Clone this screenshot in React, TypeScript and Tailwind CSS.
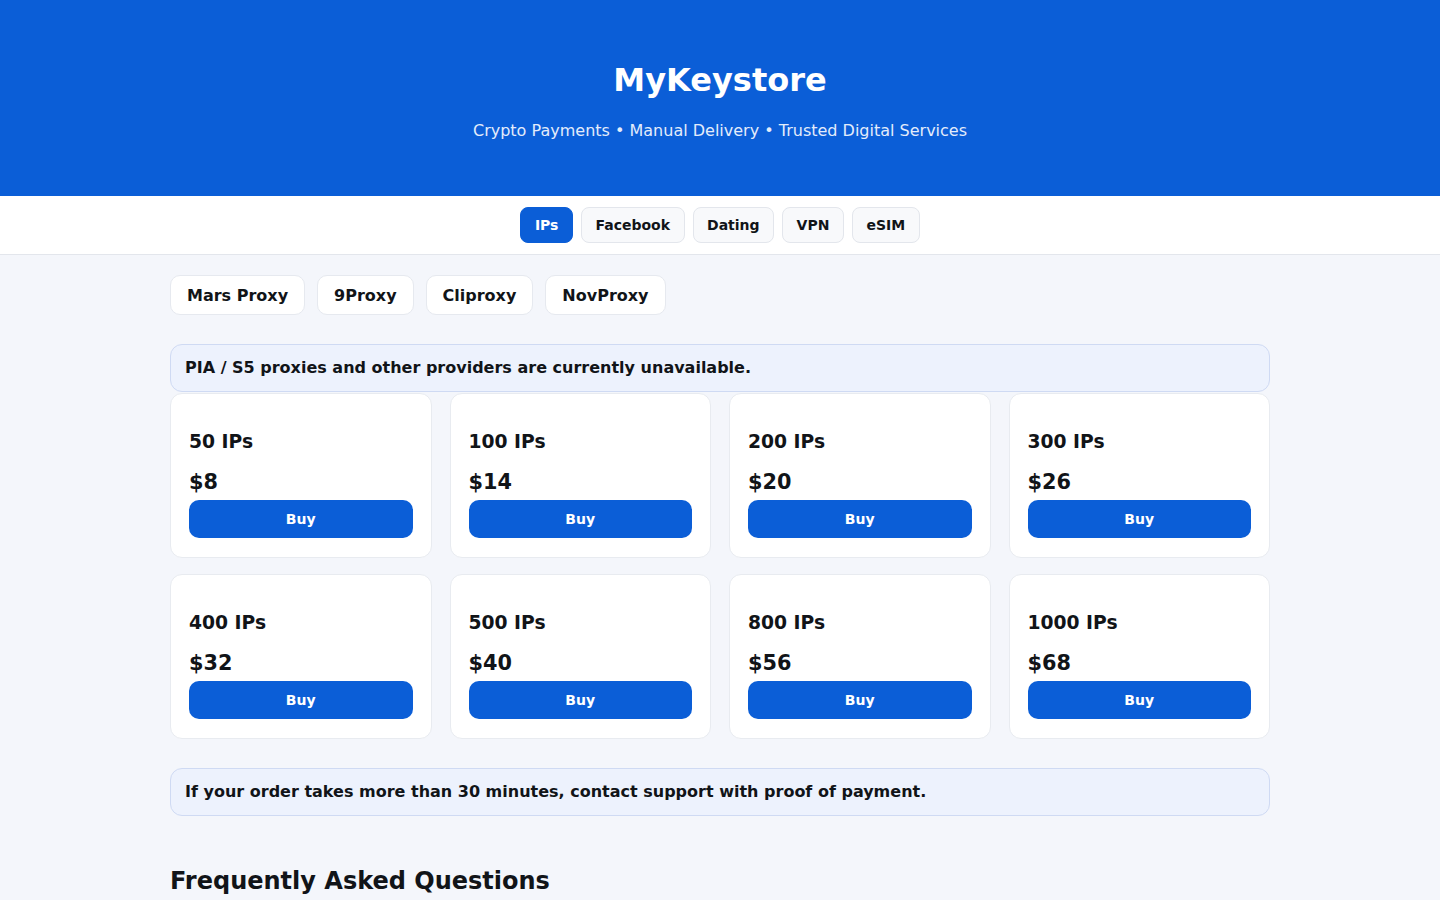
import { useState } from 'react'

const categories = ['IPs', 'Facebook', 'Dating', 'VPN', 'eSIM']

const providers = ['Mars Proxy', '9Proxy', 'Cliproxy', 'NovProxy']

const packages = [
  { id: 1, title: '50 IPs', price: '$8' },
  { id: 2, title: '100 IPs', price: '$14' },
  { id: 3, title: '200 IPs', price: '$20' },
  { id: 4, title: '300 IPs', price: '$26' },
  { id: 5, title: '400 IPs', price: '$32' },
  { id: 6, title: '500 IPs', price: '$40' },
  { id: 7, title: '800 IPs', price: '$56' },
  { id: 8, title: '1000 IPs', price: '$68' },
]

const faqs = [
  {
    q: 'How do I pay?',
    a: 'We accept BTC, USDT and other major cryptocurrencies. Send the exact amount shown at checkout.',
  },
  {
    q: 'How long does delivery take?',
    a: 'Orders are delivered manually, usually within a few minutes of payment confirmation.',
  },
]

export default function App() {
  const [category, setCategory] = useState('IPs')

  return (
    <div className="min-h-screen bg-[#f4f6fb] text-[#111418] font-['DejaVu_Sans',sans-serif]">
      <header className="bg-[#0b5ed7] pt-[60px] pb-[53px] text-center text-white">
        <h1 className="text-[32px] leading-[40px] font-bold">MyKeystore</h1>
        <p className="mt-[19px] text-base leading-6 text-[#e3ecfb]">
          Crypto Payments &bull; Manual Delivery &bull; Trusted Digital Services
        </p>
      </header>

      <nav className="flex justify-center gap-2 border-b border-[#e3e6ec] bg-white py-[11px]">
        {categories.map((c) => (
          <button
            key={c}
            onClick={() => setCategory(c)}
            className={
              c === category
                ? 'h-9 rounded-lg border border-[#0b5ed7] bg-[#0b5ed7] px-[13.5px] text-sm font-bold text-white'
                : 'h-9 rounded-lg border border-[#e3e6ec] bg-[#f8f9fb] px-[13.5px] text-sm font-bold text-[#111418]'
            }
          >
            {c}
          </button>
        ))}
      </nav>

      <main className="mx-auto w-[1100px] pt-5 pb-16">
        <div className="flex gap-3">
          {providers.map((p) => (
            <button
              key={p}
              className="h-10 rounded-[10px] border border-[#e6e9ef] bg-white px-4 pt-px text-base font-bold text-[#111418]"
            >
              {p}
            </button>
          ))}
        </div>

        <div className="mt-[29px] flex h-12 items-center rounded-xl border border-[#cfdaf3] bg-[#edf2fd] px-[14px] text-base font-bold">
          PIA / S5 proxies and other providers are currently unavailable.
        </div>

        <div className="mt-[1px] grid grid-cols-4 gap-x-[18px] gap-y-4">
          {packages.map((pkg) => (
            <div key={pkg.id} className="rounded-xl border border-[#e8ebf0] bg-white px-[18px] pt-[18px] pb-[19px]">
              <h3 className="mt-4 text-[18.72px] leading-7 font-bold">{pkg.title}</h3>
              <p className="mt-3 text-[20.8px] leading-7 font-bold">{pkg.price}</p>
              <button className="mt-1 h-[38px] w-full rounded-[10px] bg-[#0b5ed7] text-sm font-bold text-white">
                Buy
              </button>
            </div>
          ))}
        </div>

        <div className="mt-[29px] flex h-12 items-center rounded-xl border border-[#cfdaf3] bg-[#edf2fd] px-[14px] text-base font-bold">
          If your order takes more than 30 minutes, contact support with proof of payment.
        </div>

        <h2 className="mt-[49px] text-2xl leading-8 font-bold">Frequently Asked Questions</h2>
        <div className="mt-4 flex flex-col gap-3">
          {faqs.map((f) => (
            <div key={f.q} className="rounded-xl border border-[#e8ebf0] bg-white p-4">
              <p className="font-bold">{f.q}</p>
              <p className="mt-2 text-sm text-[#4b5563]">{f.a}</p>
            </div>
          ))}
        </div>
      </main>
    </div>
  )
}
